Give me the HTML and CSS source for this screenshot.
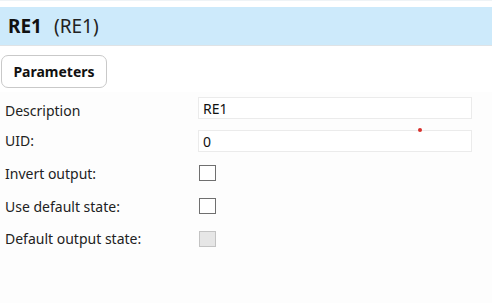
FILE: index.html
```html
<!DOCTYPE html>
<html>
<head>
<meta charset="utf-8">
<link rel="stylesheet" href="styles.css">
</head>
<body>
<div class="page">
  <div class="topline"></div>
  <div class="header">
    <span class="title">RE1</span>
    <span class="subtitle">(RE1)</span>
  </div>
  <div class="tabs">
    <button class="tab">Parameters</button>
  </div>
  <div class="form">
    <div class="row">
      <label class="label label-low">Description</label>
      <div class="field"><div class="input">RE1</div></div>
    </div>
    <div class="row">
      <label class="label">UID:</label>
      <div class="field"><div class="input">0</div><span class="dot"></span></div>
    </div>
    <div class="row">
      <label class="label">Invert output:</label>
      <div class="field"><span class="check"></span></div>
    </div>
    <div class="row">
      <label class="label">Use default state:</label>
      <div class="field"><span class="check"></span></div>
    </div>
    <div class="row">
      <label class="label">Default output state:</label>
      <div class="field"><span class="check disabled"></span></div>
    </div>
  </div>
</div>
</body>
</html>
```
FILE: styles.css
```css
html, body {
  margin: 0;
  padding: 0;
  background: #fdfdfd;
}
body {
  font-family: "Noto Sans", "Open Sans", sans-serif;
  color: #1a1a1a;
  width: 492px;
  height: 303px;
  overflow: hidden;
}
.page {
  display: flex;
  flex-direction: column;
}
.topline {
  height: 7px;
  background: #fff;
  border-top: 1px solid #eef3f6;
  box-sizing: border-box;
}
.header {
  height: 39px;
  box-sizing: border-box;
  background: #cdeafb;
  border-bottom: 1px solid #dfe3e6;
  display: flex;
  align-items: center;
  padding-left: 8px;
  gap: 12px;
  padding-bottom: 1px;
}
.title {
  font-size: 19px;
  font-weight: 700;
  color: #111;
}
.subtitle {
  font-size: 19px;
  color: #222;
}
.tabs {
  background: #fff;
  padding: 9px 0 0 1px;
  height: 46px;
  box-sizing: border-box;
}
.tab {
  font-family: inherit;
  font-size: 14px;
  font-weight: 700;
  color: #111;
  background: #fff;
  border: 1px solid #c9c9c9;
  border-radius: 7px;
  width: 106px;
  height: 33px;
  padding: 0;
}
.form {
  display: flex;
  flex-direction: column;
}
.row {
  display: flex;
  align-items: center;
  height: 32.6px;
}
.label {
  width: 198px;
  padding-left: 5px;
  box-sizing: border-box;
  font-size: 14px;
  color: #222;
}
.label-low {
  padding-top: 4px;
}
.field {
  position: relative;
  flex: 0 0 auto;
}
.input {
  width: 274px;
  height: 22px;
  box-sizing: border-box;
  border: 1px solid #ebebeb;
  background: #fff;
  font-size: 14px;
  line-height: 20px;
  padding: 1px 0 0 4px;
  color: #111;
}
.dot {
  position: absolute;
  left: 220px;
  top: -2px;
  width: 4px;
  height: 4px;
  border-radius: 50%;
  background: #d9302c;
}
.check {
  display: block;
  margin-left: 1px;
  width: 17px;
  height: 16px;
  box-sizing: border-box;
  border: 1px solid #6f6f6f;
  background: #fff;
}
.check.disabled {
  border-color: #c3c3c3;
  background: #e6e6e6;
}
```
